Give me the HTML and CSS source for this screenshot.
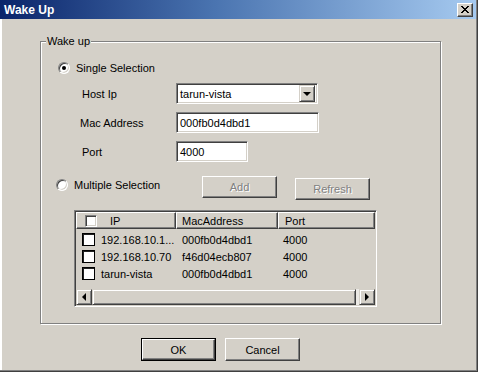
FILE: index.html
```html
<!DOCTYPE html>
<html lang="en">
<head>
    <meta charset="UTF-8">
    <meta name="viewport" content="width=device-width, initial-scale=1.0">
    <title>Wake Up</title>
    <link rel="stylesheet" href="styles.css">
</head>
<body>
    <div class="window">
        <div class="titlebar">
            <span class="title">Wake Up</span>
            <span class="close">
                <svg width="8" height="7" viewBox="0 0 8 7">
                    <path d="M0 0h2v1h1v1h2v-1h1v-1h2v1h-1v1h-1v1h-1v1h1v1h1v1h1v1h-2v-1h-1v-1h-2v1h-1v1h-2v-1h1v-1h1v-1h1v-1h-1v-1h-1v-1h-1z" fill="#000"/>
                </svg>
            </span>
        </div>

        <div class="client">
            <fieldset class="group">
                <legend>Wake up</legend>

                <div class="option single">
                    <span class="radio checked"></span>
                    <span>Single Selection</span>
                </div>

                <div class="form">
                    <label>Host Ip</label>
                    <div class="combo">
                        <span class="combo-text">tarun-vista</span>
                        <span class="combo-btn"><span class="arrow-down"></span></span>
                    </div>

                    <label class="mac-label">Mac Address</label>
                    <div class="edit mac">000fb0d4dbd1</div>

                    <label>Port</label>
                    <div class="edit port">4000</div>
                </div>

                <div class="multi">
                    <div class="option multiple">
                        <span class="radio"></span>
                        <span>Multiple Selection</span>
                    </div>
                    <span class="btn disabled">Add</span>
                    <span class="btn disabled refresh">Refresh</span>
                </div>

                <div class="listview">
                    <div class="lv-header">
                        <div class="lv-col c1"><span class="check small"></span><span class="ip-head">IP</span></div>
                        <div class="lv-col c2">MacAddress</div>
                        <div class="lv-col c3">Port</div>
                    </div>
                    <div class="lv-rows">
                        <div class="lv-row">
                            <div class="cell c1"><span class="check"></span>192.168.10.1...</div>
                            <div class="cell c2">000fb0d4dbd1</div>
                            <div class="cell c3">4000</div>
                        </div>
                        <div class="lv-row">
                            <div class="cell c1"><span class="check"></span>192.168.10.70</div>
                            <div class="cell c2">f46d04ecb807</div>
                            <div class="cell c3">4000</div>
                        </div>
                        <div class="lv-row">
                            <div class="cell c1"><span class="check"></span>tarun-vista</div>
                            <div class="cell c2">000fb0d4dbd1</div>
                            <div class="cell c3">4000</div>
                        </div>
                    </div>
                    <div class="hscroll">
                        <span class="sb-btn"><span class="arrow-left"></span></span>
                        <span class="sb-thumb"></span>
                        <span class="sb-track"></span>
                        <span class="sb-btn"><span class="arrow-right"></span></span>
                    </div>
                </div>
            </fieldset>

            <div class="actions">
                <span class="btn default"><span class="btn-inner">OK</span></span>
                <span class="btn">Cancel</span>
            </div>
        </div>
    </div>
</body>
</html>
```

FILE: styles.css
```css
body {
    margin: 0;
    padding: 0;
    font-family: "Liberation Sans", Arial, sans-serif;
    font-size: 11px;
    color: #000;
    background-color: #d4d0c8;
}

.window {
    width: 478px;
    height: 372px;
    box-sizing: border-box;
    background-color: #d4d0c8;
    box-shadow: inset -1px -1px 0 #404040, inset -2px -2px 0 #808080, inset 2px 0 0 #fff;
    overflow: hidden;
}

/* title bar */
.titlebar {
    height: 19px;
    margin-right: 2px;
    background: linear-gradient(to right, #0a246a 0%, #4a74b0 45%, #a6caf0 100%);
    display: flex;
    align-items: center;
    justify-content: space-between;
    padding: 0 3px 0 4px;
}
.title {
    color: #fff;
    font-weight: bold;
    font-size: 12px;
}
.close {
    width: 16px;
    height: 14px;
    box-sizing: border-box;
    background-color: #d4d0c8;
    border: 1px solid;
    border-color: #fff #404040 #404040 #fff;
    box-shadow: inset -1px -1px 0 #808080;
    display: flex;
    align-items: center;
    justify-content: center;
}

/* group box */
.client {
    padding-top: 16px;
}
.group {
    margin: 0 0 0 40px;
    padding: 0 0 16px 0;
    width: 401px;
    height: 289px;
    box-sizing: border-box;
    border: 1px solid #808080;
    box-shadow: inset 1px 1px 0 #fff, 1px 1px 0 #fff;
    min-width: 0;
}
.group legend {
    margin-left: 5px;
    padding: 0 1px;
    line-height: 13px;
    background-color: #d4d0c8;
}

.option {
    display: flex;
    align-items: center;
    gap: 6px;
    height: 14px;
}
.single {
    margin: 13px 0 0 17px;
}
.multiple {
    width: 146px;
    margin: 2px 0 0 15px;
}

.radio {
    width: 12px;
    height: 12px;
    box-sizing: border-box;
    border-radius: 50%;
    border: 1px solid;
    border-color: #808080 #fff #fff #808080;
    box-shadow: inset 1px 1px 0 #404040, inset -1px -1px 0 #d4d0c8;
    background-color: #fff;
    display: flex;
    align-items: center;
    justify-content: center;
}
.radio.checked::after {
    content: "";
    width: 4px;
    height: 4px;
    border-radius: 50%;
    background-color: #000;
}

/* host / mac / port */
.form {
    display: grid;
    grid-template-columns: 94px auto;
    row-gap: 8px;
    align-items: center;
    margin: 8px 0 0 41px;
}
.mac-label {
    margin-left: -2px;
}
.combo, .edit {
    height: 21px;
    box-sizing: border-box;
    background-color: #fff;
    border: 1px solid;
    border-color: #808080 #fff #fff #808080;
    box-shadow: inset 1px 1px 0 #404040, inset -1px -1px 0 #d4d0c8;
    display: flex;
    align-items: center;
}
.combo {
    width: 142px;
    padding: 2px;
    justify-content: space-between;
}
.combo-text {
    padding-left: 1px;
}
.combo-btn {
    width: 16px;
    height: 17px;
    box-sizing: border-box;
    background-color: #d4d0c8;
    border: 1px solid;
    border-color: #d4d0c8 #404040 #404040 #d4d0c8;
    box-shadow: inset 1px 1px 0 #fff, inset -1px -1px 0 #808080;
    display: flex;
    align-items: center;
    justify-content: center;
}
.edit {
    padding-left: 3px;
}
.mac {
    width: 143px;
}
.port {
    width: 72px;
}

.arrow-down {
    border-left: 4px solid transparent;
    border-right: 4px solid transparent;
    border-top: 4px solid #000;
    margin-top: 1px;
}
.arrow-left {
    border-top: 4px solid transparent;
    border-bottom: 4px solid transparent;
    border-right: 4px solid #000;
}
.arrow-right {
    border-top: 4px solid transparent;
    border-bottom: 4px solid transparent;
    border-left: 4px solid #000;
}

/* buttons */
.btn {
    width: 75px;
    height: 22px;
    box-sizing: border-box;
    background-color: #d4d0c8;
    border: 1px solid;
    border-color: #fff #404040 #404040 #fff;
    box-shadow: inset -1px -1px 0 #808080;
    display: flex;
    align-items: center;
    justify-content: center;
}
.btn.disabled {
    color: #808080;
    text-shadow: 1px 1px 0 #fff;
}
.multi {
    display: flex;
    align-items: flex-start;
    gap: 18px;
    margin-top: 14px;
    height: 24px;
}
.multi .option {
    margin-right: -18px;
}
.refresh {
    margin-top: 2px;
}

/* list view */
.listview {
    margin: 10px 0 0 33px;
    width: 303px;
    height: 97px;
    box-sizing: border-box;
    border: 1px solid;
    border-color: #808080 #fff #fff #808080;
    box-shadow: inset 1px 1px 0 #404040, inset -1px -1px 0 #d4d0c8;
    padding: 1px;
    display: flex;
    flex-direction: column;
}
.lv-header {
    display: flex;
    height: 17px;
}
.lv-col {
    height: 17px;
    box-sizing: border-box;
    border: 1px solid;
    border-color: #fff #404040 #404040 #fff;
    box-shadow: inset -1px -1px 0 #808080;
    display: flex;
    align-items: center;
}
.lv-col.c1 {
    width: 100px;
    padding-left: 8px;
}
.lv-col.c2 {
    width: 102px;
    padding-left: 5px;
}
.lv-col.c3 {
    flex: 1;
    padding-left: 6px;
}
.ip-head {
    margin-left: 13px;
}

.lv-rows {
    flex: 1;
    padding-top: 2px;
}
.lv-row {
    display: flex;
    height: 17px;
    align-items: center;
}
.cell.c1 {
    width: 100px;
    display: flex;
    align-items: center;
    gap: 6px;
    padding-left: 6px;
    box-sizing: border-box;
}
.cell.c2 {
    width: 102px;
    padding-left: 6px;
    box-sizing: border-box;
}
.cell.c3 {
    padding-left: 5px;
}

.check {
    width: 13px;
    height: 13px;
    box-sizing: border-box;
    background-color: #fff;
    border: 1px solid;
    border-color: #808080 #fff #fff #808080;
    box-shadow: inset 1px 1px 0 #404040, inset -1px -1px 0 #d4d0c8;
    flex-shrink: 0;
}
.lv-row .check {
    border-color: #000;
    box-shadow: inset 1px 1px 0 #202020;
}
.check.small {
    width: 12px;
    height: 12px;
}

.hscroll {
    display: flex;
    height: 16px;
}
.sb-btn, .sb-thumb {
    box-sizing: border-box;
    background-color: #d4d0c8;
    border: 1px solid;
    border-color: #d4d0c8 #404040 #404040 #d4d0c8;
    box-shadow: inset 1px 1px 0 #fff, inset -1px -1px 0 #808080;
    display: flex;
    align-items: center;
    justify-content: center;
}
.sb-btn {
    width: 16px;
}
.sb-thumb {
    width: 264px;
}
.sb-track {
    flex: 1;
    background-color: #ebe9e5;
}

/* dialog buttons */
.actions {
    display: flex;
    gap: 9px;
    margin: 14px 0 0 141px;
}
.actions .btn {
    height: 23px;
}
.btn.default {
    border: 1px solid #000;
    box-shadow: none;
    padding: 0;
    align-items: stretch;
    justify-content: stretch;
}
.btn-inner {
    flex: 1;
    border: 1px solid;
    border-color: #fff #404040 #404040 #fff;
    box-shadow: inset -1px -1px 0 #808080;
    display: flex;
    align-items: center;
    justify-content: center;
}
```
